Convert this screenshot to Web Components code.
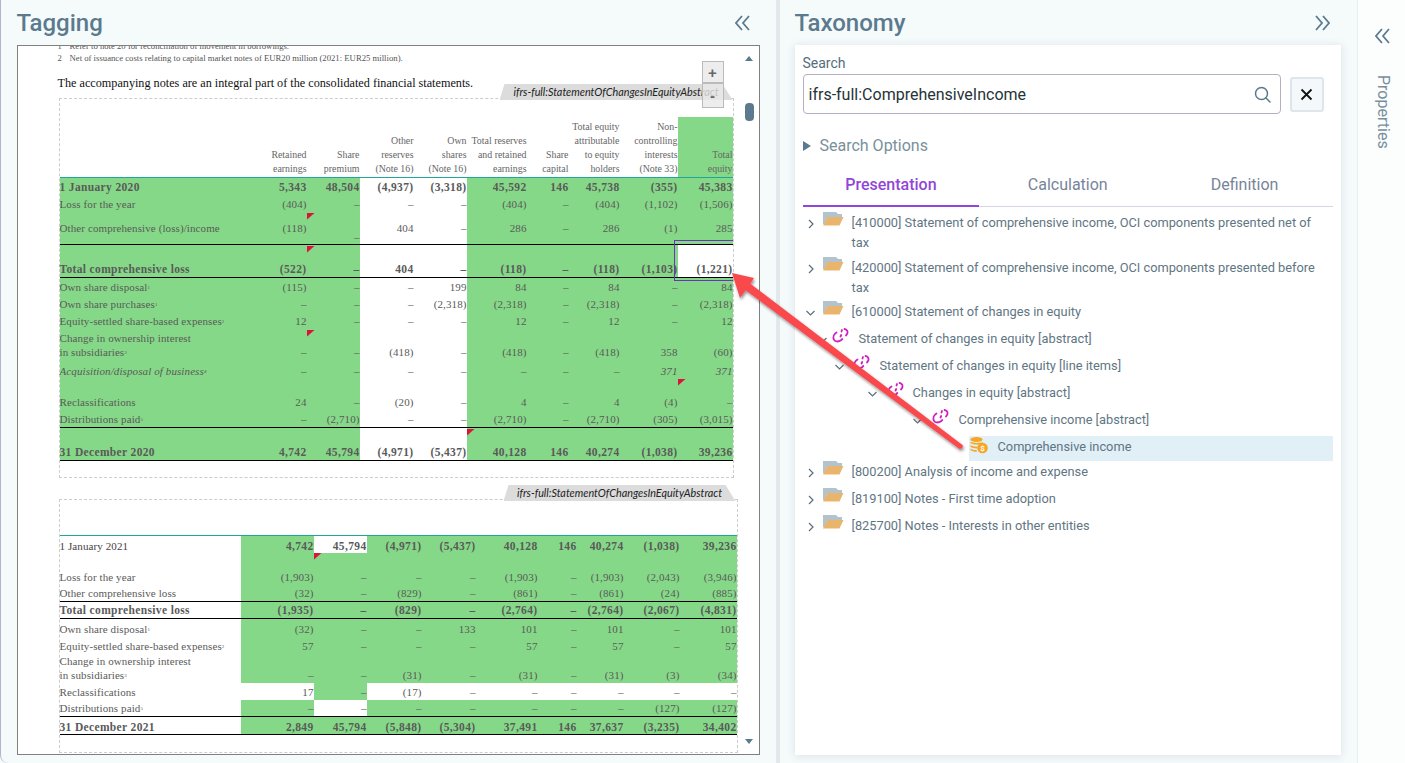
<!DOCTYPE html>
<html><head><meta charset="utf-8"><title>Tagging</title>
<style>
html,body{margin:0;height:763px;overflow:hidden;background:#f5fafb;font-family:Roboto,"Liberation Sans",sans-serif}
</style></head><body>
<x-app></x-app>
<script>
const D='–';
const T1={cols:[190,57,53,54,53,60,42,51,58,55],width:673,rows:[
{h:61,head:1,fill:'wwwwwwwwwg',v:'b',pb:1,cells:['',['Retained','earnings'],['Share','premium'],['Other','reserves','(Note 16)'],['Own','shares','(Note 16)'],['Total reserves','and retained','earnings'],['Share','capital'],['Total equity','attributable','to equity','holders'],['Non-','controlling','interests','(Note 33)'],['Total','equity']],teal:1},
{h:18,b:1,fill:'gggwwggggg',cells:['1 January 2020','5,343','48,504','(4,937)','(3,318)','45,592','146','45,738','(355)','45,383']},
{h:17,pb:2,fill:'gggwwggggg',cells:['Loss for the year','(404)',D,D,D,'(404)',D,'(404)','(1,102)','(1,506)']},
{h:32,pb:2,fill:'gggwwggggg',line:1,low:[2],m:[2,0],cells:['Other comprehensive (loss)/income','(118)',D,'404',D,'286',D,'286','(1)','285']},
{h:33,b:1,v:'b',pb:1,fill:'gggwwggggw',line:1,m:[2,1],cells:['Total comprehensive loss','(522)',D,'404',D,'(118)',D,'(118)','(1,103)','(1,221)']},
{h:17,fill:'gggwwggggg',cells:[['Own share disposal','1'],'(115)',D,D,'199','84',D,'84',D,'84']},
{h:17,fill:'gggwwggggg',cells:[['Own share purchases','1'],D,D,D,'(2,318)','(2,318)',D,'(2,318)',D,'(2,318)']},
{h:17,fill:'gggwwggggg',cells:[['Equity-settled share-based expenses','2'],'12',D,D,D,'12',D,'12',D,'12']},
{h:33,v:'b',pb:3,fill:'gggwwggggg',m:[2,1],cells:[['Change in ownership interest','<br>in subsidiaries','3'],D,D,'(418)',D,'(418)',D,'(418)','358','(60)']},
{h:17,i:1,fill:'gggwwggggg',cells:[['Acquisition/disposal of business','4'],D,D,D,D,D,D,D,'371','371']},
{h:32,v:'b',pb:2,fill:'gggwwggggg',m:[9,0],cells:['Reclassifications','24',D,'(20)',D,'4',D,'4','(4)',D]},
{h:17,fill:'gggwwggggg',line:1,cells:[['Distributions paid','5'],D,'(2,710)',D,D,'(2,710)',D,'(2,710)','(305)','(3,015)']},
{h:33,b:1,v:'b',pb:1,fill:'gggwwggggg',line:1,m:[5,1],cells:['31 December 2020','4,742','45,794','(4,971)','(5,437)','40,128','146','40,274','(1,038)','39,236']}
]};
const T2={cols:[181,73,53,55,54,62,39,47,56,57],width:677,rows:[
{h:18,b:1,v:'b',fill:'wgwggggggg',lightLabel:1,teal0:1,cells:['1 January 2021','4,742','45,794','(4,971)','(5,437)','40,128','146','40,274','(1,038)','39,236']},
{h:17,fill:'wggggggggg',m:[2,0],cells:['','','','','','','','','','']},
{h:16,pb:2,fill:'wggggggggg',cells:['Loss for the year','(1,903)',D,D,D,'(1,903)',D,'(1,903)','(2,043)','(3,946)']},
{h:16,pb:1,fill:'wggggggggg',line:1,cells:['Other comprehensive loss','(32)',D,'(829)',D,'(861)',D,'(861)','(24)','(885)']},
{h:17,b:1,fill:'wggggggggg',line:1,cells:['Total comprehensive loss','(1,935)',D,'(829)',D,'(2,764)',D,'(2,764)','(2,067)','(4,831)']},
{h:18,v:'b',pb:1,fill:'wggggggggg',cells:[['Own share disposal','1'],'(32)',D,D,'133','101',D,'101',D,'101']},
{h:17,fill:'wggggggggg',cells:[['Equity-settled share-based expenses','2'],'57',D,D,D,'57',D,'57',D,'57']},
{h:29,v:'b',pb:1,fill:'wggggggggg',cells:[['Change in ownership interest','<br>in subsidiaries','3'],D,D,'(31)',D,'(31)',D,'(31)','(3)','(34)']},
{h:17,pt:1,fill:'wwgwwwwwww',cells:['Reclassifications','17',D,'(17)',D,D,D,D,D,D]},
{h:17,fill:'wgwggggggg',line:1,cells:[['Distributions paid','5'],D,D,D,D,D,D,D,'(127)','(127)']},
{h:18,b:1,pt:3,fill:'wggggggggg',line:1,cells:['31 December 2021','2,849','45,794','(5,848)','(5,304)','37,491','146','37,637','(3,235)','34,402']}
]};

function def(name,css,html){
  customElements.define(name,class extends HTMLElement{
    constructor(){super();this.attachShadow({mode:'open'})}
    connectedCallback(){ if(!this.shadowRoot.firstChild) this.shadowRoot.innerHTML=`<style>${css}</style>${typeof html==='function'?html(this):html}` }
  });
}

def('x-fin-table',`
:host{display:block}
table{border-collapse:separate;border-spacing:0;table-layout:fixed;font:11px/14px "Liberation Serif","DejaVu Serif",serif;letter-spacing:.1px;color:#5a5a5a;font-variant-numeric:oldstyle-nums}
td{padding:0;text-align:right;vertical-align:middle;position:relative;white-space:nowrap}
td:first-child{text-align:left}
.g{background:#85d887}
.w{background:#fff}
tr.b td{font-weight:bold;font-size:11.5px;letter-spacing:.35px}
tr.i td{font-style:italic}
tr.line td{border-bottom:1px solid #000}
tr.teal td{border-bottom:1px solid #1fa79b}
tr.teal0 td{border-top:1px solid #1fa79b}
tr.head td{color:#666;font-size:9.9px;letter-spacing:0}
tr.lt td:first-child{font-weight:normal;font-size:11px;letter-spacing:.1px;color:#444}
sup{font-size:5px;line-height:0;vertical-align:2px}
.mk{position:absolute;left:0;width:8px;height:7px;background:#dc143c;clip-path:polygon(0 0,100% 0,0 100%)}
`,el=>{
  const d=el.getAttribute('set')==='t2'?T2:T1;
  let s=`<table style="width:${d.width}px"><colgroup>${d.cols.map(c=>`<col style="width:${c}px">`).join('')}</colgroup>`;
  for(const r of d.rows){
    const cl=[r.b&&'b',r.i&&'i',r.line&&'line',r.teal&&'teal',r.teal0&&'teal0',r.head&&'head',r.lightLabel&&'lt'].filter(Boolean).join(' ');
    s+=`<tr class="${cl}" style="height:${r.h}px">`;
    r.cells.forEach((c,i)=>{
      let t=c;
      if(Array.isArray(c)){
        if(r.head) t=c.join('<br>');
        else t=c.length===3?c[0]+c[1]+`<sup>${c[2]}</sup>`:c[0]+`<sup>${c[1]}</sup>`;
      }
      let st='';
      const low=r.low&&r.low.includes(i);
      if(r.v==='b'||low) st+='vertical-align:bottom;';
      if(r.pb&&!low) st+=`padding-bottom:${r.pb}px;`;
      if(r.pt&&!low) st+=`padding-top:${r.pt}px;`;
      const mk=(r.m&&r.m[0]===i)?`<span class="mk" style="top:${r.m[1]}px"></span>`:'';
      s+=`<td class="${r.fill[i]}" style="${st}">${mk}${t}</td>`;
    });
    s+='</tr>';
  }
  return s+'</table>';
});

def('x-fin-block',`
:host{display:block;position:relative;box-sizing:border-box;width:max-content;border:1px dashed #ccc;padding:var(--pt,0) 0 var(--pb,0) 0;margin-left:var(--ml,0);margin-top:var(--mt,0)}
.tab{position:absolute;bottom:100%;margin-bottom:-1px;right:var(--tr,0);width:var(--tw,233px);height:16px;background:#dcdcdc;clip-path:polygon(5px 0,calc(100% - 10px) 0,100% 100%,0 100%);
 font:italic 10.8px/16px Lato,"Open Sans","Liberation Sans",sans-serif;color:#222;text-align:center;white-space:nowrap;box-sizing:border-box}
`,el=>`<div class="tab">${el.getAttribute('tag')}</div><slot></slot>`);

def('x-doc-frame',`
:host{display:block;position:relative;box-sizing:border-box;width:743px;height:710px;border:1px solid #808080;background:#fff;overflow:hidden}
.page{margin-top:-6px;padding-left:40px;font-family:"Liberation Serif",serif}
.note{font-size:8.7px;line-height:12px;color:#555;display:flex;white-space:nowrap}
.note b{font-weight:normal;width:12px}
.st{font-size:12.2px;line-height:14px;color:#111;margin-top:12px;white-space:nowrap}
.zoom{position:absolute;right:35px;top:15px;display:flex;flex-direction:column}
.zoom span{box-sizing:border-box;width:22px;height:22px;border:1px solid #bbb;background:rgba(232,232,232,.8);color:#666;display:flex;align-items:center;justify-content:center;font:bold 15px/1 "Liberation Sans",sans-serif}
.zoom span+span{height:25px}
.sb{position:absolute;right:0;top:0;bottom:0;width:17px}
.up,.dn{position:absolute;left:3px;width:0;height:0;border:4.5px solid transparent}
.up{top:10px;border-top:0;border-bottom:5px solid #5b7a8e}
.dn{bottom:10px;border-bottom:0;border-top:5px solid #5b7a8e}
.th{position:absolute;left:3px;top:57px;width:9px;height:18px;border-radius:4px;background:#5b7a8e}
`,`<div class="page">
<div class="note"><b>1</b><span>Refer to note 20 for reconciliation of movement in borrowings.</span></div>
<div class="note"><b>2</b><span>Net of issuance costs relating to capital market notes of EUR20 million (2021: EUR25 million).</span></div>
<div class="st">The accompanying notes are an integral part of the consolidated financial statements.</div>
<slot></slot></div>
<div class="zoom"><span>+</span><span>-</span></div>
<div class="sb"><i class="up"></i><i class="th"></i><i class="dn"></i></div>`);

def('x-panel',`
:host{display:block;box-sizing:border-box;position:relative;height:763px}
header{display:flex;justify-content:space-between;align-items:center;height:45px;box-sizing:border-box;padding-right:var(--hr,10px)}
h1{margin:0;font:500 24px/30px Roboto,sans-serif;color:#5b7a8e}
svg{display:block}
`,el=>`<header><h1>${el.getAttribute('heading')}</h1>
<svg width="15" height="16" viewBox="0 0 15 16" fill="none" stroke="#5b7a8e" stroke-width="1.800" style="transform:${el.hasAttribute('flip')?'scaleX(-1)':'none'}"><path d="M7 1 1 8l6 7M14 1 8 8l6 7"/></svg></header><slot></slot>`);

const folder=`<svg width="21" height="14" viewBox="0 0 21 14"><path d="M0 0h13l2 2h4v4H4L1.500 12H0z" fill="#b3c3cd"/><path d="M4.500 5H20.500l-4 8.500H0z" fill="#e9b56d"/></svg>`;
const link=`<svg width="17" height="16" viewBox="0 0 17 16" fill="none" stroke="#cf1fc0" stroke-width="1.800" stroke-linecap="round"><path d="M4.500 4.500C2 6 .8 9 1.800 11.500s4.700 2.500 7.200.7l1.300-1.200"/><path d="M8.500 8.500l.7-1.500"/><path d="M9.500 3.500l.5-1.500"/><path d="M12.500 1c2.300.3 3.500 2.300 2.800 4.500l-1.300 2"/></svg>`;
const coin=`<svg width="18" height="17" viewBox="0 0 18 17"><ellipse cx="6.500" cy="2.500" rx="6" ry="2.400" fill="#f5a623"/><path d="M.5 4.500c2 1.800 9 1.800 12 .5v1.500c-3 1.500-10 1.500-12-.5zM.5 8c1.500 1.300 4.500 1.800 7 1.600L7 11.500c-2.500 0-5.500-.5-6.500-1.700zM.5 11.500c1.500 1 3.500 1.500 6 1.500l.5 1.800c-3 0-5.500-.6-6.500-1.800z" fill="#f5a623"/><circle cx="12.500" cy="11" r="5.300" fill="#f5a623"/><text x="12.500" y="14" font-size="8" font-family="Roboto" font-weight="700" fill="#fff" text-anchor="middle">$</text></svg>`;

def('x-tree-node',`
:host{display:block;position:relative;min-height:27px;font:12.8px/20px Roboto,sans-serif;color:#5f7683}
.r{display:block;position:relative;padding-left:var(--tx);padding-right:3px}
.c{position:absolute;left:var(--cx);top:6px;width:9px;height:9px}
.i{position:absolute;left:var(--ix);top:var(--iy,-1px)}
.i svg,.c svg{display:block}
:host([selected]){min-height:25px;margin-top:-1px;margin-bottom:1px}
:host([selected]) .bg{position:absolute;left:var(--bx);right:0;top:0;bottom:0;background:#e1eff7}
:host([selected]) .r{padding-top:1px}
:host([selected]) .i{top:1px}
`,el=>{
  const tx=el.getAttribute('tx'),cx=el.getAttribute('cx'),ix=el.getAttribute('ix'),ic=el.getAttribute('icon'),ch=el.getAttribute('ch');
  el.style.setProperty('--tx',tx+'px');el.style.setProperty('--cx',cx+'px');el.style.setProperty('--ix',ix+'px');
  el.style.setProperty('--bx',(+ix-1)+'px');
  const icon=ic==='folder'?folder:ic==='link'?link:coin;
  const chev=ch==='r'?'<path d="M3 1l4 4-4 4"/>':ch==='d'?'<path d="M.5 3l4 4 4-4"/>':'';
  return `<div class="bg"></div><div class="r"><span class="c"><svg width="9" height="10" viewBox="0 0 9 10" fill="none" stroke="#5b6f7c" stroke-width="1.200">${chev}</svg></span><span class="i">${icon}</span><slot></slot></div>`;
});

def('x-tabs',`
:host{display:flex;border-bottom:1px solid #d8d4e4;height:38px;box-sizing:border-box;margin-top:12px;font:500 16px/32px Roboto,sans-serif;color:#78849a}
span{flex:1;text-align:center;box-sizing:border-box;height:38px}
.on{color:#9146d8;border-bottom:2px solid #9146d8;font-weight:500}
`,`<span class="on">Presentation</span><span style="font-weight:400">Calculation</span><span style="font-weight:400">Definition</span>`);

def('x-search',`
:host{display:block;font-family:Roboto,sans-serif}
label{display:block;font-size:14px;line-height:18px;color:#546e7a;padding-top:9px}
.row{display:flex;align-items:center;gap:9px;margin-top:2px}
.inp{flex:0 0 478px;box-sizing:border-box;height:40px;border:1px solid #b4b0c0;border-radius:4px;display:flex;align-items:center;justify-content:space-between;padding:0 9px 0 5px;font-size:16px;color:#263238;background:#fff}
.x{box-sizing:border-box;width:34px;height:35px;border:2px solid #dde6ea;border-radius:3px;background:#f5f8fa;display:flex;align-items:center;justify-content:center}
.opt{display:flex;align-items:center;gap:9px;margin-top:21px;font-size:16px;line-height:22px;color:#78909c}
.tri{width:0;height:0;border-left:8px solid #5b7a8e;border-top:5px solid transparent;border-bottom:5px solid transparent}
`,`<label>Search</label><div class="row"><div class="inp"><span>ifrs-full:ComprehensiveIncome</span>
<svg width="17" height="17" viewBox="0 0 17 17" fill="none" stroke="#5b7a8e" stroke-width="1.500"><circle cx="7.500" cy="7.500" r="6"/><path d="M12 12l4 4" stroke-linecap="round"/></svg></div>
<div class="x"><svg width="13" height="13" viewBox="0 0 13 13" stroke="#111" stroke-width="1.800"><path d="M1.500 1.500l10 10M11.500 1.500l-10 10"/></svg></div></div>
<div class="opt"><i class="tri"></i><span>Search Options</span></div>`);

def('x-card',`
:host{display:block;box-sizing:border-box;width:546.500px;height:710px;background:#fff;box-shadow:0 1px 8px rgba(90,120,140,.18);padding:0 8px}
`,`<slot></slot>`);

def('x-props',`
:host{display:flex;flex-direction:column;align-items:center;flex:1;height:763px;background:#fcfefe;border-left:1px solid #e6eef1;box-sizing:border-box;padding:28px 0 0 2px;font-family:Roboto,sans-serif;color:#78909c}
svg{display:block}
span{writing-mode:vertical-rl;font-size:16px;line-height:20px;margin-top:31px}
`,`<svg width="15" height="16" viewBox="0 0 15 16" fill="none" stroke="#5b7a8e" stroke-width="1.800"><path d="M7 1 1 8l6 7M14 1 8 8l6 7"/></svg><span>Properties</span>`);

def('x-arrow',`
:host{position:absolute;left:0;top:0;width:1405px;height:763px;pointer-events:none;display:block}
svg{display:block}
`,`<svg width="1405" height="763"><defs><filter id="s" x="-10%" y="-10%" width="120%" height="120%"><feDropShadow dx="1" dy="2" stdDeviation="1.500" flood-color="#000" flood-opacity=".45"/></filter></defs>
<g filter="url(#s)"><path d="M732 273 754 278 750.400 283.800 962.500 445Q964 448 959.500 449L745.600 290.200 740 298z" fill="#f9484e"/></g></svg>`);

def('x-selection',`
:host{position:absolute;left:656.500px;top:194px;width:58.500px;height:41px;box-sizing:border-box;border:1px solid #7030c0;border-right:0;pointer-events:none}
`,``);

def('x-app',`
:host{display:flex;position:relative;width:1405px;height:763px;overflow:hidden}
.sp{flex:0 0 4px;background:#e1e9ed;height:763px}
.left{flex:0 0 776px;box-sizing:border-box;border-left:1.500px solid #b0b6d2;border-bottom-left-radius:8px;padding:0 16px 0 15.500px;--hr:10px}
.right{flex:0 0 577px;box-sizing:border-box;padding:0 16px 0 14.500px;--hr:11px}
`,`<div class="left"><x-panel heading="Tagging">
<x-doc-frame>
 <x-fin-block tag="ifrs-full:StatementOfChangesInEquityAbstract" style="--pt:18px;--pb:16px;--ml:1px;--mt:8px;--tr:0px;--tw:233px"><x-fin-table set="t1"></x-fin-table></x-fin-block>
 <x-fin-block tag="ifrs-full:StatementOfChangesInEquityAbstract" style="--pt:35px;--pb:17px;--ml:1px;--mt:21px;--tr:1px;--tw:232px"><x-fin-table set="t2"></x-fin-table></x-fin-block>
 <x-selection></x-selection>
</x-doc-frame></x-panel></div>
<div class="sp"></div>
<div class="right"><x-panel heading="Taxonomy" flip><x-card>
<x-search></x-search><x-tabs></x-tabs>
<div style="height:6px"></div>
<x-tree-node tx="49" cx="3" ix="20" icon="folder" ch="r" style="min-height:44.500px">[410000] Statement of comprehensive income, OCI components presented net of tax</x-tree-node>
<x-tree-node tx="49" cx="3" ix="20" icon="folder" ch="r" style="min-height:44.500px">[420000] Statement of comprehensive income, OCI components presented before tax</x-tree-node>
<x-tree-node tx="49" cx="3" ix="20" icon="folder" ch="d">[610000] Statement of changes in equity</x-tree-node>
<x-tree-node tx="56" cx="15" ix="29" icon="link" ch="d">Statement of changes in equity [abstract]</x-tree-node>
<x-tree-node tx="77" cx="32" ix="50" icon="link" ch="d">Statement of changes in equity [line items]</x-tree-node>
<x-tree-node tx="110" cx="65" ix="84" icon="link" ch="d">Changes in equity [abstract]</x-tree-node>
<x-tree-node tx="156" cx="110" ix="129" icon="link" ch="d">Comprehensive income [abstract]</x-tree-node>
<x-tree-node tx="195" cx="150" ix="167" icon="coin" selected>Comprehensive income</x-tree-node>
<x-tree-node tx="49" cx="3" ix="20" icon="folder" ch="r">[800200] Analysis of income and expense</x-tree-node>
<x-tree-node tx="49" cx="3" ix="20" icon="folder" ch="r">[819100] Notes - First time adoption</x-tree-node>
<x-tree-node tx="49" cx="3" ix="20" icon="folder" ch="r">[825700] Notes - Interests in other entities</x-tree-node>
</x-card></x-panel></div>
<x-props></x-props>
<x-arrow></x-arrow>`);
</script>
</body></html>
